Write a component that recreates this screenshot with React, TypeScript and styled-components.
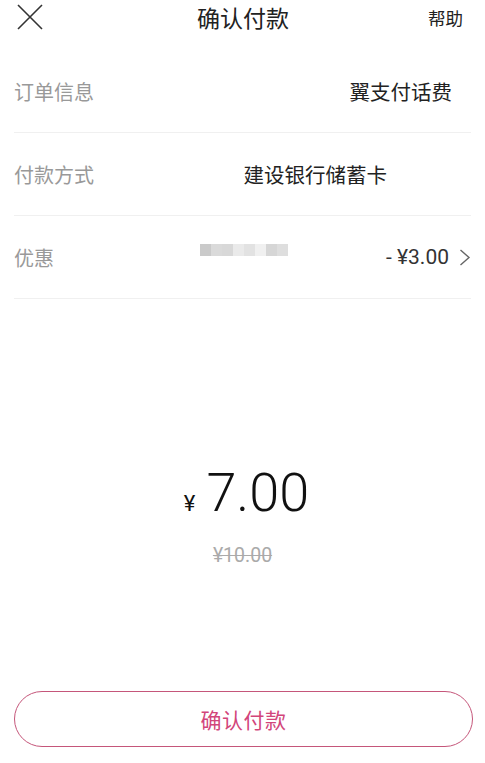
import { FC } from "react";
import styled, { createGlobalStyle } from "styled-components";

const GlobalStyle = createGlobalStyle`
  html, body {
    margin: 0;
    padding: 0;
    background: #ffffff;
  }
  body {
    font-family: "Noto Sans CJK SC", "Noto Sans", "Liberation Sans", sans-serif;
    color: #222;
  }
`;

const Page = styled.div`
  width: 485px;
  height: 763px;
  display: flex;
  flex-direction: column;
  background: #fff;
  overflow: hidden;
`;

const TopBar = styled.header`
  height: 34px;
  display: grid;
  grid-template-columns: 1fr auto 1fr;
  align-items: center;
  padding: 0 22px 0 17px;
  .close {
    justify-self: start;
    display: flex;
  }
  .help {
    justify-self: end;
    font-size: 17.5px;
    color: #222;
  }
`;

const Title = styled.h1`
  margin: 0 0 0 6px;
  font-size: 23px;
  font-weight: 400;
  color: #222;
`;

const List = styled.section`
  margin-top: 16px;
  padding: 0 14px;
`;

const Row = styled.div<{ $padRight: number }>`
  height: 82px;
  display: flex;
  align-items: center;
  border-bottom: 1px solid #f0f0f0;
  padding-right: ${(p) => p.$padRight}px;
  position: relative;
`;

const Label = styled.span`
  font-size: 20px;
  color: #999;
  flex: 1;
`;

const Value = styled.span`
  font-size: 20.5px;
  color: #222;
  display: flex;
  align-items: center;
  gap: 10px;
`;

const Discount = styled.span`
  font-family: "Roboto", "Liberation Sans", sans-serif;
  font-size: 21px;
  color: #333;
`;

const Mosaic = styled.div`
  position: absolute;
  left: 186px;
  top: 28px;
  display: flex;
  opacity: 0.8;
  span {
    width: 11px;
    height: 12px;
  }
`;

const PriceBlock = styled.div`
  flex: 1;
  display: flex;
  flex-direction: column;
  align-items: center;
  justify-content: flex-end;
  padding-bottom: 124px;
`;

const Amount = styled.div`
  display: flex;
  align-items: baseline;
  gap: 11px;
  font-family: "Roboto", "Liberation Sans", sans-serif;
  color: #111;
  margin-left: 8px;
  .yen {
    font-size: 22px;
  }
  .num {
    font-size: 54px;
    font-weight: 300;
    line-height: 1;
  }
`;

const Original = styled.div`
  margin-top: 24px;
  font-family: "Roboto", "Liberation Sans", sans-serif;
  font-size: 19.5px;
  color: #aaa;
  text-decoration: line-through;
`;

const ConfirmButton = styled.button`
  margin: 0 12px 16px 14px;
  height: 56px;
  border-radius: 28px;
  border: 1.5px solid #c5567a;
  background: #fff;
  color: #d2457a;
  font-family: "Noto Sans CJK SC", sans-serif;
  font-size: 21px;
  letter-spacing: 0.5px;
  cursor: pointer;
`;

const CloseIcon: FC = () => (
  <svg width="26" height="26" viewBox="0 0 26 26" fill="none">
    <path d="M1 1L25 25M25 1L1 25" stroke="#333" strokeWidth="1.6" />
  </svg>
);

const Chevron: FC = () => (
  <svg width="12" height="17" viewBox="0 0 12 17" fill="none">
    <path d="M1.5 1L10 8.5L1.5 16" stroke="#666" strokeWidth="1.4" />
  </svg>
);

const mosaicColors = ["#bdbdbd", "#d2d2d2", "#cfcfcf", "#e6e6e6", "#dcdcdc", "#ededed", "#cdcdcd", "#d7d7d7"];

export default function App() {
  return (
    <>
      <GlobalStyle />
      <Page>
        <TopBar>
          <span className="close">
            <CloseIcon />
          </span>
          <Title>确认付款</Title>
          <span className="help">帮助</span>
        </TopBar>
        <List>
          <Row $padRight={19}>
            <Label>订单信息</Label>
            <Value>翼支付话费</Value>
          </Row>
          <Row $padRight={84}>
            <Label>付款方式</Label>
            <Value>建设银行储蓄卡</Value>
          </Row>
          <Row $padRight={0}>
            <Label>优惠</Label>
            <Mosaic>
              {mosaicColors.map((c, i) => (
                <span key={i} style={{ background: c }} />
              ))}
            </Mosaic>
            <Value>
              <Discount>- ¥3.00</Discount>
              <Chevron />
            </Value>
          </Row>
        </List>
        <PriceBlock>
          <Amount>
            <span className="yen">¥</span>
            <span className="num">7.00</span>
          </Amount>
          <Original>¥10.00</Original>
        </PriceBlock>
        <ConfirmButton>确认付款</ConfirmButton>
      </Page>
    </>
  );
}
